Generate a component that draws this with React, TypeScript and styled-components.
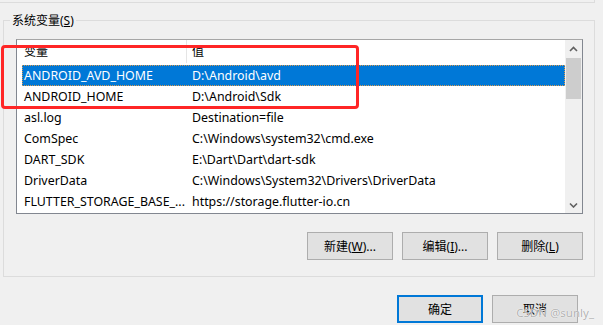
import styled, { createGlobalStyle } from 'styled-components';

const GlobalStyle = createGlobalStyle`
  html, body {
    margin: 0;
    padding: 0;
    background: #f0f0f0;
  }
  * {
    box-sizing: border-box;
  }
`;

const Window = styled.div`
  position: relative;
  width: 603px;
  height: 325px;
  overflow: hidden;
  background: #f0f0f0;
  font-family: 'Noto Sans', 'Noto Sans CJK SC', sans-serif;
  font-size: 12px;
  color: #000;
`;

// bottom-right corner of the group above (user variables)
const TopEdge = styled.div`
  width: 595px;
  height: 3px;
  border-bottom: 1px solid #dcdcdc;
  border-right: 1px solid #dcdcdc;
`;

const GroupBox = styled.div`
  display: flex;
  flex-direction: column;
  margin: 17px 0 0 3px;
  width: 592px;
  border: 1px solid #dcdcdc;
  padding: 0 11px 16px 0;
`;

const GroupTitle = styled.div`
  align-self: flex-start;
  margin: -8px 0 0 6px;
  padding: 0 2px;
  height: 16px;
  line-height: 16px;
  background: #f0f0f0;
`;

const ListView = styled.div`
  display: flex;
  width: 567px;
  height: 175px;
  margin: 10px 0 0 12px;
  background: #fff;
  border: 1px solid #828790;
  border-top-color: #a6a6a6;
`;

const ListBody = styled.div`
  flex: 1;
  padding-left: 5px;
  overflow: hidden;
  font-size: 12.4px;
`;

const Row = styled.div<{ $selected?: boolean }>`
  display: grid;
  grid-template-columns: 164px 1fr;
  height: 21px;
  align-items: center;
  white-space: nowrap;
  background: ${p => (p.$selected ? '#0078d7' : 'transparent')};
  color: ${p => (p.$selected ? '#fff' : '#000')};
  outline: ${p => (p.$selected ? '1px dotted #d89a50' : 'none')};
  outline-offset: -1px;
`;

const HeaderRow = styled(Row)`
  height: 25px;
  align-items: stretch;
  font-size: 12px;
`;

const NameCell = styled.span`
  padding-left: 2px;
  overflow: hidden;
  line-height: 21px;
`;

const ValueCell = styled.span`
  padding-left: 6px;
  overflow: hidden;
  line-height: 21px;
`;

const HeaderName = styled(NameCell)`
  line-height: 24px;
`;

const HeaderValue = styled(ValueCell)`
  line-height: 24px;
  border-left: 1px solid #e5e5e5;
  padding-left: 5px;
  height: 23px;
`;

const ScrollBar = styled.div`
  display: flex;
  flex-direction: column;
  width: 17px;
  background: #f0f0f0;
`;

const ScrollArrow = styled.div`
  display: flex;
  align-items: center;
  justify-content: center;
  height: 17px;
`;

const Thumb = styled.div`
  height: 41px;
  margin: 1px 1px 0;
  background: #cdcdcd;
`;

const Track = styled.div`
  flex: 1;
`;

const ButtonRow = styled.div`
  display: flex;
  justify-content: flex-end;
  gap: 9px;
  margin-top: 18px;
`;

const DialogButtons = styled.div`
  display: flex;
  justify-content: flex-end;
  gap: 9px;
  margin-top: 18px;
  padding-right: 25px;
`;

const Button = styled.button<{ $default?: boolean }>`
  width: 86px;
  height: 28px;
  padding: 0;
  font: inherit;
  color: #000;
  background: #e1e1e1;
  border: ${p => (p.$default ? '2px solid #0078d7' : '1px solid #adadad')};
`;

const Annotation = styled.div`
  position: absolute;
  left: 1px;
  top: 45px;
  width: 358px;
  height: 64px;
  border: 3px solid #ff2626;
  border-radius: 4px;
`;

const Watermark = styled.div`
  position: absolute;
  right: 9px;
  bottom: 5px;
  font-size: 11.5px;
  color: rgba(150, 150, 150, 0.75);
  text-shadow: 0 0 1px #fff, 0 0 1px #fff;
`;

const Chevron = ({ down }: { down?: boolean }) => (
  <svg width="9" height="6" viewBox="0 0 9 6">
    <polyline
      points={down ? '1,1.5 4.5,5 8,1.5' : '1,5 4.5,1.5 8,5'}
      fill="none"
      stroke="#606060"
      strokeWidth="1.6"
    />
  </svg>
);

const variables: [string, string][] = [
  ['ANDROID_AVD_HOME', 'D:\\Android\\avd'],
  ['ANDROID_HOME', 'D:\\Android\\Sdk'],
  ['asl.log', 'Destination=file'],
  ['ComSpec', 'C:\\Windows\\system32\\cmd.exe'],
  ['DART_SDK', 'E:\\Dart\\Dart\\dart-sdk'],
  ['DriverData', 'C:\\Windows\\System32\\Drivers\\DriverData'],
  ['FLUTTER_STORAGE_BASE_...', 'https://storage.flutter-io.cn'],
];

export default function App() {
  return (
    <Window>
      <GlobalStyle />
      <TopEdge />
      <GroupBox>
        <GroupTitle>
          系统变量(<u>S</u>)
        </GroupTitle>
        <ListView>
          <ListBody>
            <HeaderRow>
              <HeaderName>变量</HeaderName>
              <HeaderValue>值</HeaderValue>
            </HeaderRow>
            {variables.map(([name, value], i) => (
              <Row key={name} $selected={i === 0}>
                <NameCell>{name}</NameCell>
                <ValueCell>{value}</ValueCell>
              </Row>
            ))}
          </ListBody>
          <ScrollBar>
            <ScrollArrow>
              <Chevron />
            </ScrollArrow>
            <Thumb />
            <Track />
            <ScrollArrow>
              <Chevron down />
            </ScrollArrow>
          </ScrollBar>
        </ListView>
        <ButtonRow>
          <Button>
            新建(<u>W</u>)...
          </Button>
          <Button>
            编辑(<u>I</u>)...
          </Button>
          <Button>
            删除(<u>L</u>)
          </Button>
        </ButtonRow>
      </GroupBox>
      <DialogButtons>
        <Button $default>确定</Button>
        <Button>取消</Button>
      </DialogButtons>
      <Annotation />
      <Watermark>CSDN @sunly_</Watermark>
    </Window>
  );
}
